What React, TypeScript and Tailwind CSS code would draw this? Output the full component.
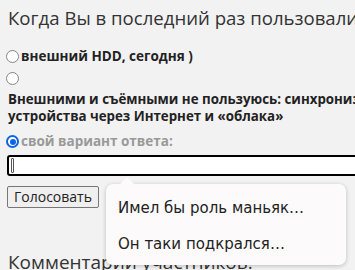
import React from 'react';

const Radio: React.FC<{ checked?: boolean }> = ({ checked }) => (
  <span
    className={`relative inline-block w-[13px] h-[13px] rounded-full shrink-0 box-border ${
      checked ? 'border-[2px] border-[#0b63e5] bg-white' : 'border border-[#858585] bg-white'
    }`}
  >
    {checked && <span className="absolute inset-[1.5px] rounded-full bg-[#0b63e5]" />}
  </span>
);

export default function App() {
  return (
    <div
      className="relative w-[355px] h-[270px] overflow-hidden bg-[#f2f2f2] text-[#333]"
      style={{ fontFamily: '"Open Sans", "Noto Sans", sans-serif' }}
    >
      <div className="pl-[8px] pt-[4px]">
        {/* Question */}
        <h2 className="text-[18.6px] leading-[28px] whitespace-nowrap text-[#333]">
          Когда Вы в последний раз пользовались
        </h2>

        <div className="mt-[16px] h-[17px] flex items-center gap-[2px] -ml-[2px]">
          <Radio />
          <span className="font-bold text-[13.5px] leading-[17px] text-[#222]">внешний HDD, сегодня )</span>
        </div>

        <div className="mt-[7px] h-[13px] flex -ml-[2px]">
          <Radio />
        </div>
        <div className="mt-[6px] font-bold text-[13.3px] leading-[17px] text-[#222] whitespace-nowrap">
          Внешними и съёмными не пользуюсь: синхронизирую
          <br />
          устройства через Интернет и «облака»
        </div>

        <div className="mt-[8px] h-[17px] flex items-center gap-[2px] -ml-[2px]">
          <Radio checked />
          <span className="font-bold text-[13.5px] leading-[17px] text-[#999]">свой вариант ответа:</span>
        </div>

        {/* Own answer input */}
        <div className="mt-[5px] -ml-[1px] w-[400px] h-[21px] border-[2px] border-black rounded-[3px] bg-white flex items-center pl-[2px]">
          <span className="w-[3px] h-[15px] border border-[#555] rounded-[1px]" />
        </div>

        <button className="mt-[10px] -ml-[1px] h-[22px] px-[6px] border border-[#767676] rounded-[2px] bg-[#efefef] text-[14px] leading-[18px] text-[#222]">
          Голосовать
        </button>

        <h2 className="mt-[40px] text-[19px] leading-[28px] whitespace-nowrap text-[#333]">
          Комментарии участников:
        </h2>
      </div>

      {/* Popup menu */}
      <div
        className="absolute left-[106px] top-[184px] w-[240px] h-[81px] rounded-[7px] bg-[#fcfafa] shadow-[0_1px_4px_rgba(0,0,0,0.22)] pt-[6px] px-[12px] text-[15px] text-[#222]"
        style={{ fontFamily: '"DejaVu Sans", sans-serif' }}
      >
        <div className="absolute -top-[7px] left-[14px] w-0 h-0 border-l-[7px] border-r-[7px] border-b-[7px] border-l-transparent border-r-transparent border-b-[#fcfafa]" />
        <div className="leading-[36px] whitespace-nowrap">Имел бы роль маньяк…</div>
        <div className="leading-[36px] whitespace-nowrap">Он таки подкрался…</div>
      </div>
    </div>
  );
}
